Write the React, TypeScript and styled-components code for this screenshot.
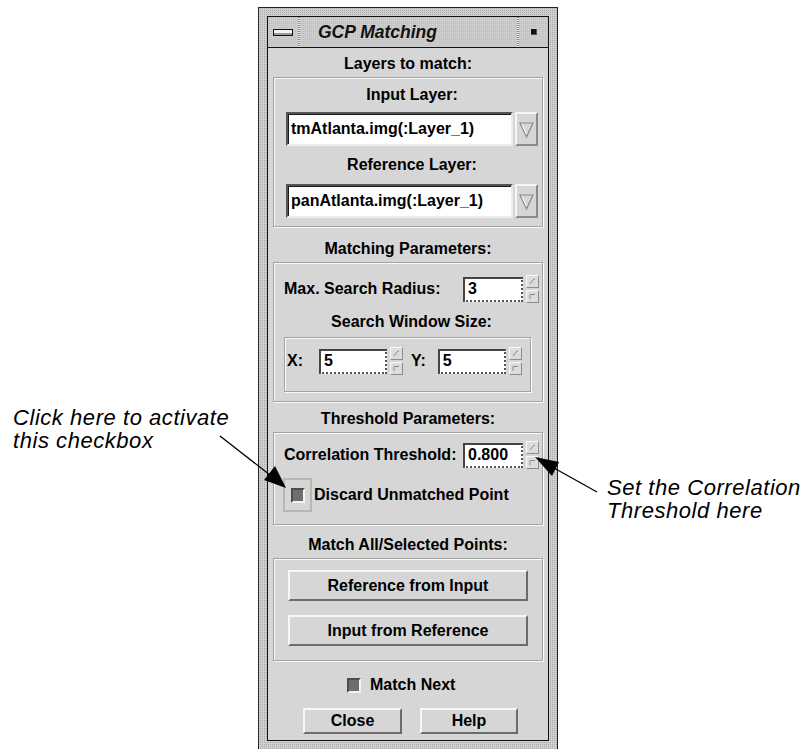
import React from "react";
import styled, { createGlobalStyle } from "styled-components";

const Global = createGlobalStyle`
  html, body { margin: 0; padding: 0; background: #fff; overflow: hidden; }
  body { font-family: "Liberation Sans", Arial, sans-serif; color: #000; }
`;

const UI_FONT = `"Liberation Sans", Arial, Helvetica, sans-serif`;

const Page = styled.div`
  position: relative;
  width: 810px;
  height: 749px;
  box-sizing: border-box;
  padding-top: 7px;
  display: grid;
  grid-template-columns: 258px 300px 1fr;
  align-items: start;
  overflow: hidden;
`;

const Note = styled.div<{ $top: number; $left: number }>`
  margin-top: ${(p) => p.$top}px;
  padding-left: ${(p) => p.$left}px;
  font: italic 22px/23px ${UI_FONT};
  letter-spacing: 0.55px;
  color: #000;
  white-space: nowrap;
`;

const Overlay = styled.svg`
  position: absolute;
  left: 0;
  top: 0;
  width: 810px;
  height: 749px;
  pointer-events: none;
`;

const Window = styled.div`
  width: 300px;
  height: 743px;
  box-sizing: border-box;
  border: 1px solid #222;
  padding: 8px;
  background-color: #d0d0d0;
  background-image: conic-gradient(#a9a9a9 25%, transparent 0);
  background-size: 2px 2px;
  display: flex;
  flex-direction: column;
`;

const Inner = styled.div`
  flex: 1;
  border: 1px solid #111;
  background: #d6d6d6;
  display: flex;
  flex-direction: column;
`;

const TitleBar = styled.div`
  height: 30px;
  flex: none;
  border-bottom: 1px solid #111;
  display: flex;
  align-items: stretch;
  background-color: #cdcdcd;
  background-image: conic-gradient(#bcbcbc 25%, transparent 0);
  background-size: 2px 2px;
`;

const MenuBox = styled.div`
  width: 30px;
  display: flex;
  align-items: center;
  justify-content: center;
`;

const MenuBar = styled.div`
  width: 20px;
  height: 7px;
  box-sizing: border-box;
  border: 1px solid #111;
  background: #f2f2f2;
  box-shadow: inset 0 -2px 0 #9a9a9a;
`;

const TitleSep = styled.div`
  width: 2px;
  background: repeating-linear-gradient(180deg, #8a8a8a 0 1px, #e8e8e8 1px 2px);
`;

const TitleText = styled.div`
  flex: 1;
  padding-left: 18px;
  display: flex;
  align-items: center;
  font: italic bold 17.5px ${UI_FONT};
  color: #111;
`;

const CornerBox = styled.div`
  width: 29px;
  display: flex;
  align-items: center;
  justify-content: center;
`;

const CornerDot = styled.div`
  width: 6px;
  height: 6px;
  box-sizing: border-box;
  background: #111;
  border-right: 1px solid #555;
  border-bottom: 1px solid #555;
`;

const Content = styled.div`
  flex: 1;
  padding: 0 5px;
  display: flex;
  flex-direction: column;
`;

const SectionTitle = styled.div<{ $mt: number }>`
  height: 26px;
  margin-top: ${(p) => p.$mt}px;
  display: flex;
  align-items: center;
  justify-content: center;
  font: bold 16px ${UI_FONT};
`;

const Group = styled.div<{ $pad: string }>`
  border: 1px solid #a2a2a2;
  box-shadow: inset 1px 1px 0 #fbfbfb, 1px 1px 0 #fbfbfb;
  padding: ${(p) => p.$pad};
  display: flex;
  flex-direction: column;
`;

const SubLabel = styled.div<{ $mt?: number }>`
  height: 26px;
  margin-top: ${(p) => p.$mt ?? 0}px;
  display: flex;
  align-items: center;
  justify-content: center;
  font: bold 16px ${UI_FONT};
`;

const Combo = styled.div<{ $mt: number }>`
  margin-top: ${(p) => p.$mt}px;
  display: flex;
  gap: 2px;
  height: 34px;
`;

const ComboField = styled.div`
  flex: 1;
  box-sizing: border-box;
  background: #fff;
  border-style: solid;
  border-width: 2px;
  border-color: #555 #ececec #ececec #555;
  box-shadow: inset 1px 1px 0 #1a1a1a;
  padding-left: 3px;
  display: flex;
  align-items: center;
  font: bold 16px ${UI_FONT};
`;

const ComboArrow = styled.div`
  width: 23px;
  box-sizing: border-box;
  background: #d6d6d6;
  border-style: solid;
  border-width: 2px;
  border-color: #f6f6f6 #8a8a8a #8a8a8a #f6f6f6;
  display: flex;
  align-items: center;
  justify-content: center;
`;

const Row = styled.div<{ $mt?: number }>`
  margin-top: ${(p) => p.$mt ?? 0}px;
  display: flex;
  align-items: center;
  height: 28px;
`;

const RowLabel = styled.div<{ $ml?: number; $grow?: boolean }>`
  margin-left: ${(p) => p.$ml ?? 0}px;
  flex: ${(p) => (p.$grow ? 1 : "none")};
  font: bold 16px ${UI_FONT};
  white-space: nowrap;
`;

const NumGroup = styled.div<{ $ml?: number }>`
  margin-left: ${(p) => p.$ml ?? 0}px;
  display: flex;
  align-items: center;
  gap: 3px;
`;

const NumField = styled.div<{ $w: number }>`
  width: ${(p) => p.$w}px;
  height: 25px;
  box-sizing: border-box;
  background: #fff;
  border-top: 2px solid #444;
  border-left: 2px solid #444;
  border-right: 2px dotted #555;
  border-bottom: 2px dotted #555;
  padding-left: 3px;
  display: flex;
  align-items: center;
  font: bold 16px ${UI_FONT};
`;

const Spinner = styled.div`
  display: flex;
  flex-direction: column;
  gap: 2px;
`;

const SpinBtn = styled.div`
  width: 13px;
  height: 13px;
  box-sizing: border-box;
  background: #dcdcdc;
  border-style: solid;
  border-width: 1px;
  border-color: #fafafa #8c8c8c #8c8c8c #fafafa;
  display: flex;
`;

const SubGroup = styled.div`
  margin-top: 2px;
  margin-right: 8px;
  border: 1px solid #a2a2a2;
  box-shadow: inset 1px 1px 0 #fbfbfb, 1px 1px 0 #fbfbfb;
  padding: 9px 0 16px 2px;
  display: flex;
  flex-direction: column;
`;

const CheckRow = styled.div<{ $mt: number }>`
  margin-top: ${(p) => p.$mt}px;
  display: flex;
  align-items: center;
  gap: 2px;
`;

const FocusRing = styled.div`
  width: 29px;
  height: 34px;
  box-sizing: border-box;
  border: 2px solid #b6b6b6;
  display: flex;
  align-items: center;
  justify-content: center;
  margin-left: -1px;
`;

const CheckBox = styled.div`
  width: 14px;
  height: 15px;
  box-sizing: border-box;
  background: #6e6e6e;
  border-style: solid;
  border-width: 2px;
  border-color: #4c4c4c #f4f4f4 #f4f4f4 #4c4c4c;
`;

const CheckText = styled.div`
  font: bold 16px ${UI_FONT};
  white-space: nowrap;
`;

const PushButton = styled.div<{ $w: number; $h: number; $mt?: number }>`
  width: ${(p) => p.$w}px;
  height: ${(p) => p.$h}px;
  margin-top: ${(p) => p.$mt ?? 0}px;
  box-sizing: border-box;
  background: #d6d6d6;
  border-style: solid;
  border-width: 2px;
  border-color: #f8f8f8 #6c6c6c #6c6c6c #f8f8f8;
  display: flex;
  align-items: center;
  justify-content: center;
  font: bold 16px ${UI_FONT};
  flex: none;
`;

const ButtonCol = styled.div`
  display: flex;
  flex-direction: column;
  align-items: center;
`;

const ButtonRow = styled.div`
  margin-top: 13px;
  padding-left: 30px;
  display: flex;
  gap: 18px;
`;

const MatchRow = styled.div`
  margin-top: 14px;
  height: 20px;
  padding-left: 74px;
  display: flex;
  align-items: center;
  gap: 9px;
`;

const DownTriangle = () => (
  <svg width="15" height="17" viewBox="0 0 15 17">
    <polygon points="1,2 14,2 7.5,16" fill="none" stroke="#8a8a8a" strokeWidth="1.2" />
    <polyline points="3,3.5 7.5,13" fill="none" stroke="#ffffff" strokeWidth="1" />
  </svg>
);

const UpGlyph = () => (
  <svg width="11" height="11" viewBox="0 0 11 11">
    <polyline points="3,8 7,3 8,3" fill="none" stroke="#8c8c8c" strokeWidth="1" />
  </svg>
);

const DownGlyph = () => (
  <svg width="11" height="11" viewBox="0 0 11 11">
    <polyline points="3,8 3,3.5 8,3.5" fill="none" stroke="#8c8c8c" strokeWidth="1" />
  </svg>
);

const Spin = () => (
  <Spinner>
    <SpinBtn>
      <UpGlyph />
    </SpinBtn>
    <SpinBtn>
      <DownGlyph />
    </SpinBtn>
  </Spinner>
);

const Num = ({ value, w, ml }: { value: string; w: number; ml?: number }) => (
  <NumGroup $ml={ml}>
    <NumField $w={w}>{value}</NumField>
    <Spin />
  </NumGroup>
);

export default function App() {
  return (
    <>
      <Global />
      <Page>
        <Note $top={399} $left={13}>
          Click here to activate
          <br />
          this checkbox
        </Note>

        <Window>
          <Inner>
            <TitleBar>
              <MenuBox>
                <MenuBar />
              </MenuBox>
              <TitleSep />
              <TitleText>GCP Matching</TitleText>
              <TitleSep />
              <CornerBox>
                <CornerDot />
              </CornerBox>
            </TitleBar>

            <Content>
              <SectionTitle $mt={3}>Layers to match:</SectionTitle>
              <Group $pad="4px 4px 8px 12px">
                <SubLabel>Input Layer:</SubLabel>
                <Combo $mt={4}>
                  <ComboField>tmAtlanta.img(:Layer_1)</ComboField>
                  <ComboArrow>
                    <DownTriangle />
                  </ComboArrow>
                </Combo>
                <SubLabel $mt={6}>Reference Layer:</SubLabel>
                <Combo $mt={6}>
                  <ComboField>panAtlanta.img(:Layer_1)</ComboField>
                  <ComboArrow>
                    <DownTriangle />
                  </ComboArrow>
                </Combo>
              </Group>

              <SectionTitle $mt={9}>Matching Parameters:</SectionTitle>
              <Group $pad="12px 3px 9px 10px">
                <Row>
                  <RowLabel $grow>Max. Search Radius:</RowLabel>
                  <Num value="3" w={60} />
                </Row>
                <SubLabel $mt={6}>Search Window Size:</SubLabel>
                <SubGroup>
                  <Row>
                    <RowLabel>X:</RowLabel>
                    <Num value="5" w={68} ml={16} />
                    <RowLabel $ml={8}>Y:</RowLabel>
                    <Num value="5" w={68} ml={12} />
                  </Row>
                </SubGroup>
              </Group>

              <SectionTitle $mt={4}>Threshold Parameters:</SectionTitle>
              <Group $pad="8px 3px 12px 10px">
                <Row>
                  <RowLabel $grow>Correlation Threshold:</RowLabel>
                  <Num value="0.800" w={60} />
                </Row>
                <CheckRow $mt={9}>
                  <FocusRing>
                    <CheckBox />
                  </FocusRing>
                  <CheckText>Discard Unmatched Point</CheckText>
                </CheckRow>
              </Group>

              <SectionTitle $mt={7}>Match All/Selected Points:</SectionTitle>
              <Group $pad="11px 0 14px 0">
                <ButtonCol>
                  <PushButton $w={240} $h={31}>
                    Reference from Input
                  </PushButton>
                  <PushButton $w={240} $h={31} $mt={14}>
                    Input from Reference
                  </PushButton>
                </ButtonCol>
              </Group>

              <MatchRow>
                <CheckBox />
                <CheckText>Match Next</CheckText>
              </MatchRow>

              <ButtonRow>
                <PushButton $w={99} $h={26}>
                  Close
                </PushButton>
                <PushButton $w={98} $h={26}>
                  Help
                </PushButton>
              </ButtonRow>
            </Content>
          </Inner>
        </Window>

        <Note $top={469} $left={49}>
          Set the Correlation
          <br />
          Threshold here
        </Note>

        <Overlay viewBox="0 0 810 749">
          <line x1="220" y1="436" x2="270" y2="475" stroke="#000" strokeWidth="1.3" />
          <polygon points="286,488 264,480 275,466" fill="#000" />
          <line x1="597" y1="492" x2="554" y2="468" stroke="#000" strokeWidth="1.3" />
          <polygon points="535,457 559,462 552,476" fill="#000" />
        </Overlay>
      </Page>
    </>
  );
}
